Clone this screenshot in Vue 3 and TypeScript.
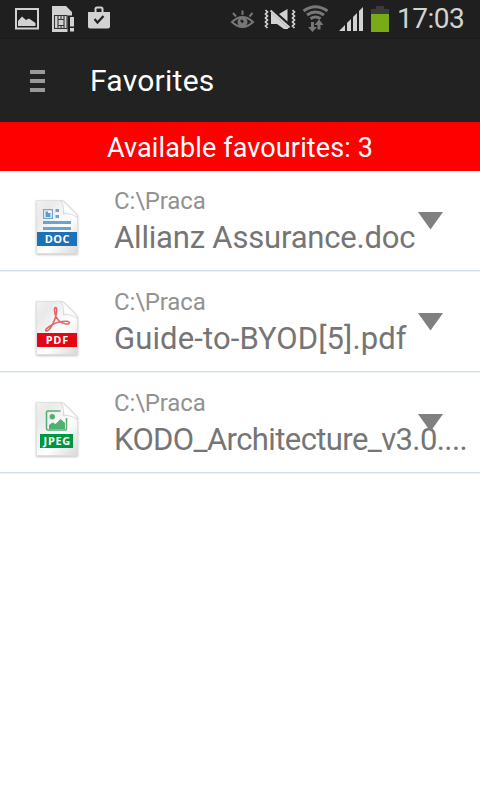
<script setup lang="ts">
type FileKind = 'DOC' | 'PDF' | 'JPEG'

interface Favourite {
  kind: FileKind
  folder: string
  name: string
}

const favourites: Favourite[] = [
  { kind: 'DOC', folder: 'C:\\Praca', name: 'Allianz Assurance.doc' },
  { kind: 'PDF', folder: 'C:\\Praca', name: 'Guide-to-BYOD[5].pdf' },
  { kind: 'JPEG', folder: 'C:\\Praca', name: 'KODO_Architecture_v3.0....' },
]
</script>

<template>
  <main class="screen">
    <div class="status">
      <svg class="tray" width="120" height="38" viewBox="0 0 120 38">
        <rect x="16" y="9" width="22" height="19.5" fill="none" stroke="#d2d2d2" stroke-width="2" />
        <path d="M18 26v-5l4-4.500 4 3.500 3-1.500 6.500 4.500v3z" fill="#d2d2d2" />
        <path d="M52 6h14l6 6v3.500h-4.500V32H52z" fill="#d2d2d2" />
        <path d="M54.500 15.500h12.500v13H54.500zM58 19.500h6v6h-6zM58 15.500v4M61 15.500v4M64 15.500v4M58 25.500v3M61 25.500v3M64 25.500v3" fill="none" stroke="#333" stroke-width="1.100" />
        <path d="M70 17h4v9.500h-4zM70 28h4v3.500h-4z" fill="#d2d2d2" />
        <path d="M88 12h22v14.500q0 2-2 2H90q-2 0-2-2z" fill="#d2d2d2" />
        <path d="M95.500 12V9q0-1.500 1.500-1.500h4q1.500 0 1.500 1.500v3" fill="none" stroke="#d2d2d2" stroke-width="2" />
        <path d="M94.500 19l3 3.500 6-6.500" fill="none" stroke="#222" stroke-width="2.200" />
      </svg>
      <svg class="signals" width="170" height="38" viewBox="225 0 170 38">
        <g fill="none" stroke="#777" stroke-width="2">
          <path d="M232 22q10.500-10 21 0-10.500 10-21 0zM233 13l3 3.500M242.500 10.500v4.500M252.500 13l-3 3.500" />
        </g>
        <circle cx="242.500" cy="22" r="5" fill="#777" />
        <path d="M241 20l2 2.500" stroke="#1f1f1f" stroke-width="2.500" />
        <path d="M271 12l17 15.500v1.500h-4l-7-5h-6zM279 14l8.500-5v12.500z" fill="#d2d2d2" />
        <path d="M272 10.500l18.500 17" stroke="#1f1f1f" stroke-width="2" />
        <path d="M270.500 10.500l19 17" stroke="#d2d2d2" stroke-width="2" />
        <path d="M265.500 10l2 2-2 2 2 2-2 2 2 2-2 2 2 2-2 2 2 2M292.500 10l2 2-2 2 2 2-2 2 2 2-2 2 2 2-2 2 2 2" fill="none" stroke="#d2d2d2" stroke-width="1.700" />
        <g fill="none" stroke="#777" stroke-width="3">
          <path d="M303.500 11q12-8.500 24 0M307 15q8.500-6 17 0M310.500 18.800q5-3.500 10 0" />
        </g>
        <path d="M311 22h3v5h3l-4.500 5-4.500-5h3zM319 19.500l4.500 5.500h-3v4.500h-3V25h-3z" fill="#777" />
        <path d="M339 31l6-6v6zM347 23l4-4v12h-4zM353 17l4-4v18h-4zM359 11l4-4v24h-4z" fill="#d2d2d2" />
        <path d="M371 9h5V6h8v3h5v5h-18z" fill="#3b3b3b" />
        <path d="M371 14h18v18h-18z" fill="#79aa18" />
      </svg>
      <span class="clock">17:03</span>
    </div>

    <header class="bar">
      <div class="menu"><i></i><i></i><i></i></div>
      <h1 class="title">Favorites</h1>
    </header>

    <div class="banner"><span>Available favourites: {{ favourites.length }}</span></div>

    <ul class="list">
      <li v-for="file in favourites" :key="file.name" class="row">
        <svg class="file" width="50" height="62" viewBox="0 0 50 62">
          <defs>
            <linearGradient :id="'page' + file.kind" x1="0" y1="0" x2="1" y2="1">
              <stop offset="0" stop-color="#f2f2f2" />
              <stop offset=".2" stop-color="#e9e9e9" />
              <stop offset=".6" stop-color="#fff" />
              <stop offset="1" stop-color="#d8d8d8" />
            </linearGradient>
            <linearGradient :id="'fold' + file.kind" x1="0" y1="1" x2="1" y2="0">
              <stop offset="0" stop-color="#dcdcdc" />
              <stop offset=".4" stop-color="#fff" />
              <stop offset="1" stop-color="#e2e2e2" />
            </linearGradient>
          </defs>
          <path class="paper" d="M4.500 4.500h24q3 0 5.500 3l9 9q2.500 2 2.500 5v36h-41z" :fill="'url(#page' + file.kind + ')'" stroke="#dedede" stroke-width=".8" />
          <g v-if="file.kind === 'DOC'">
            <path d="M11.600 13.600h8.800v8.800h-8.800z" fill="#f4f8fb" stroke="#75a6d0" stroke-width="1.200" />
            <path d="M13.500 15.500h2.500v1.500h2.500v4h-5z" fill="#609bcf" />
            <path d="M23.500 13h3.500v3h-3.500zM23.500 19h3.500v3h-3.500zM11 25h28v3H11zM11 31h28v3H11z" fill="#6ba3d3" />
          </g>
          <g v-else-if="file.kind === 'PDF'" fill="none" stroke="#e4666b" stroke-width="1.600">
            <path d="M23.500 10.500c-1.500 0-1.300 5 .5 9 1.700 3.500 5.500 6.500 9 7.300 3.500.700 5.200-.700 4-1.800-1.500-1.500-11-.600-16.500 2.500-4.500 2.500-7.500 5.200-6.700 6.200 1 1.200 4-1.200 6.400-5.700 3-5.500 4.300-10.500 4.500-14.500.100-2-.300-3-1.200-3z" />
          </g>
          <g v-else>
            <path d="M28.500 13H16q-1.500 0-1.500 1.500v16q0 1.500 1.500 1.500h17q1.500 0 1.500-1.500V20" fill="none" stroke="#52af70" stroke-width="1.500" />
            <circle cx="20.300" cy="18.700" r="2.700" fill="#52af70" />
            <path d="M17 31v-4l3.500-2.500 3 1.500 5-5 4.500 4v6z" fill="#52af70" />
          </g>
          <path d="M28.500 4.500q3.500 3 3 13.500 5-2 14 3.500 0-3-2.500-5l-9-9q-2.500-3-5.500-3z" :fill="'url(#fold' + file.kind + ')'" stroke="#c6c6c6" stroke-width=".6" />
          <rect v-if="file.kind === 'JPEG'" x="8" y="36" width="33" height="14" fill="#009640" />
          <rect v-else x="5" y="36" width="40" height="14" :fill="file.kind === 'DOC' ? '#1d71b8' : '#e30613'" />
          <text :class="['label', file.kind.toLowerCase()]" x="25.3" y="47" text-anchor="middle">{{ file.kind }}</text>
        </svg>
        <div class="info">
          <span class="folder">{{ file.folder }}</span>
          <span :class="['name', file.kind.toLowerCase()]">{{ file.name }}</span>
        </div>
        <svg class="arrow" width="25" height="18" viewBox="0 0 25 18"><path d="M0 0h25L12.500 17.500z" fill="#808080" /></svg>
      </li>
    </ul>
  </main>
</template>

<style>
body {
  margin: 0;
  background: #fff;
}
</style>

<style scoped>
.screen {
  width: 480px;
  height: 800px;
  overflow: hidden;
  background: #fff;
  font-family: Roboto, "Liberation Sans", sans-serif;
}
.status {
  display: flex;
  height: 38px;
  background: #1f1f1f;
}
.signals {
  margin-left: 105px;
}
.clock {
  margin-left: 2px;
  line-height: 38px;
  font-size: 28px;
  letter-spacing: -.5px;
  color: #d2d2d2;
}
.bar {
  box-sizing: border-box;
  display: flex;
  align-items: center;
  height: 84px;
  padding-left: 30px;
  border-top: 1px solid #191919;
  background: #222;
}
.menu {
  display: grid;
  gap: 5px;
  width: 15px;
  margin-right: 45px;
}
.menu i {
  height: 4px;
  background: #999;
}
.title {
  margin: 0;
  font-size: 30px;
  font-weight: 400;
  letter-spacing: .25px;
  color: #fff;
}
.banner {
  height: 49px;
  line-height: 53px;
  text-align: center;
  background: #f00;
  color: #fff;
  font-size: 27px;
  letter-spacing: .12px;
}
.list {
  margin: 0;
  padding: 0;
  list-style: none;
}
.row {
  box-sizing: border-box;
  position: relative;
  display: flex;
  height: 101px;
  padding: 25px 0 0 32px;
  border-bottom: 1px solid #e9f3f9;
  box-shadow: inset 0 -1px #cfdfe9;
}
.file {
  flex: none;
}
.paper {
  filter: drop-shadow(0 1px 1px rgba(0, 0, 0, .25));
}
.label {
  font-family: "Open Sans", sans-serif;
  font-size: 11px;
  font-weight: 700;
  fill: #fff;
}
.label.doc {
  letter-spacing: .4px;
}
.label.pdf {
  letter-spacing: .7px;
}
.label.jpeg {
  letter-spacing: .7px;
}
.info {
  display: flex;
  flex-direction: column;
  margin: -9px 0 0 32px;
  white-space: nowrap;
}
.folder {
  height: 29px;
  line-height: 28px;
  font-size: 24px;
  letter-spacing: -.15px;
  color: #929292;
}
.name {
  height: 44px;
  line-height: 44px;
  font-size: 31px;
  color: #757575;
}
.name.doc {
  letter-spacing: -.19px;
}
.name.pdf {
  letter-spacing: .12px;
}
.name.jpeg {
  letter-spacing: -.6px;
}
.arrow {
  position: absolute;
  left: 417.500px;
  top: 41px;
}
</style>
